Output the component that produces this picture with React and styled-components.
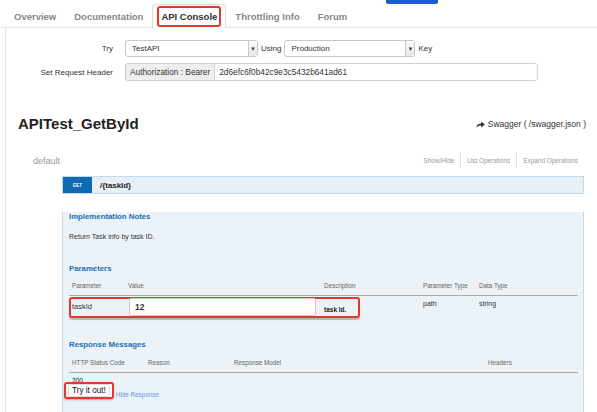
import styled, { createGlobalStyle } from "styled-components";

const GlobalStyle = createGlobalStyle`
  html, body {
    margin: 0;
    padding: 0;
    background: #fff;
    overflow: hidden;
  }
  body {
    font-family: "Liberation Sans", Arial, sans-serif;
    color: #333;
  }
`;

const Page = styled.div`
  width: 597px;
  height: 412px;
  overflow: hidden;
`;

const TabBar = styled.div`
  display: flex;
  align-items: flex-end;
  height: 27px;
  padding-left: 5px;
  border-bottom: 1px solid #e4e4e4;
`;

const Tab = styled.div`
  height: ${(p) => (p.active ? "23px" : "22px")};
  display: flex;
  align-items: center;
  padding: 0 ${(p) => (p.active ? "4px" : "8px")};
  font-size: 9.5px;
  font-weight: bold;
  color: ${(p) => (p.active ? "#333" : "#888")};
  background: ${(p) => (p.active ? "#fff" : "transparent")};
  border: ${(p) => (p.active ? "1px solid #ddd" : "1px solid transparent")};
  border-bottom: none;
  border-radius: 4px 4px 0 0;
  margin-bottom: ${(p) => (p.active ? "-1px" : "0")};
`;

const Highlight = styled.span`
  border: 2px solid #e5382d;
  border-radius: 3px;
  padding: 3px 2px;
`;

const BlueStub = styled.div`
  align-self: flex-start;
  margin-left: 30px;
  width: 52px;
  height: 4px;
  background: #1a5fd0;
  border-radius: 0 0 2px 2px;
`;

const Panel = styled.div`
  margin-left: 5px;
  border-left: 1px solid #e4e4e4;
  padding-top: 12px;
  height: 400px;
`;

const FormRow = styled.div`
  display: grid;
  grid-template-columns: 107px 1fr;
  column-gap: 12px;
  align-items: center;
  margin-bottom: 6px;
  font-size: 8px;
`;

const Label = styled.div`
  text-align: right;
  color: #333;
`;

const Controls = styled.div`
  display: flex;
  align-items: center;
  gap: 3px;
`;

const Select = styled.div`
  display: flex;
  align-items: center;
  justify-content: space-between;
  width: ${(p) => p.w}px;
  height: 17px;
  box-sizing: border-box;
  border: 1px solid #c8c8c8;
  border-radius: 3px;
  background: #fff;
  padding-left: 6px;
  font-size: 8px;
`;

const Caret = styled.div`
  width: 8px;
  height: 15px;
  border-left: 1px solid #c8c8c8;
  display: flex;
  align-items: center;
  justify-content: center;
  background: linear-gradient(#fafafa, #e8e8e8);
  font-size: 6px;
  color: #444;
`;

const InputGroup = styled.div`
  display: flex;
  width: 413px;
  height: 18px;
  box-sizing: border-box;
  border: 1px solid #cfcfcf;
  border-radius: 3px;
  overflow: hidden;
  font-size: 8.3px;
`;

const Addon = styled.div`
  display: flex;
  align-items: center;
  padding: 0 4px;
  background: #eee;
  border-right: 1px solid #cfcfcf;
`;

const InputText = styled.div`
  display: flex;
  align-items: center;
  padding-left: 4px;
`;

const TitleRow = styled.div`
  display: flex;
  justify-content: space-between;
  align-items: center;
  padding: 0 11px 0 12px;
  margin-top: 33px;
`;

const Title = styled.h1`
  margin: 0;
  font-size: 15px;
  font-weight: bold;
  color: #222;
  line-height: 20px;
`;

const SwaggerLink = styled.div`
  display: flex;
  align-items: center;
  gap: 3px;
  font-size: 8.5px;
  color: #333;
`;

const SectionRow = styled.div`
  display: flex;
  justify-content: space-between;
  align-items: center;
  padding: 0 19px 0 27px;
  margin-top: 19px;
`;

const SectionName = styled.div`
  font-size: 9px;
  color: #999;
`;

const OpsLinks = styled.div`
  display: flex;
  align-items: center;
  font-size: 6.4px;
  color: #999;
`;

const OpsLink = styled.span`
  padding: 2px 6px;
  border-left: ${(p) => (p.first ? "none" : "1px solid #e2e2e2")};
  line-height: 11px;
  &:last-child {
    padding-right: 0;
  }
`;

const OpBlock = styled.div`
  margin: 8px 13px 0 56px;
`;

const OpHeader = styled.div`
  display: flex;
  align-items: center;
  height: 18px;
  box-sizing: border-box;
  border: 1px solid #c3d9ec;
  background: #e7f0f7;
`;

const Method = styled.div`
  width: 29px;
  height: 16px;
  background: #0f6ab4;
  color: #fff;
  font-size: 4.5px;
  font-weight: bold;
  display: flex;
  align-items: center;
  justify-content: center;
`;

const Path = styled.div`
  margin-left: 8px;
  font-size: 7.9px;
  font-weight: bold;
  color: #222;
`;

const OpBody = styled.div`
  background: #ebf3f9;
  border: 1px solid #c3d9ec;
  border-top: none;
  padding: 0 5px 0 6px;
  height: 230px;
`;

const Heading = styled.h4`
  margin: ${(p) => p.top}px 0 0;
  font-size: 7.8px;
  font-weight: bold;
  color: #1d6eb5;
  line-height: 10px;
`;

const Notes = styled.p`
  margin: 10px 0 0;
  font-size: 7px;
  line-height: 10px;
  color: #333;
`;

const TableHead = styled.div`
  display: grid;
  grid-template-columns: ${(p) => p.cols};
  margin-top: ${(p) => p.top}px;
  padding: 0 3px 4px;
  border-bottom: 1px solid #a9a9a9;
  font-size: 6.3px;
  line-height: 10px;
  color: #666;
`;

const ParamRow = styled.div`
  display: grid;
  grid-template-columns: 56px 196px 99px 56px 1fr;
  margin-top: 1px;
  font-size: 7.5px;
`;

const RowHighlight = styled.div`
  grid-column: 1 / 4;
  grid-row: 1;
  justify-self: start;
  width: 291px;
  height: 21px;
  box-sizing: border-box;
  border: 2px solid #e5382d;
  border-radius: 3px;
  box-shadow: 0 2px 1px rgba(0, 0, 0, 0.25);
`;

const Cell = styled.div`
  grid-row: 1;
  grid-column: ${(p) => p.col};
  padding: ${(p) => p.pad || "6px 0 0 3px"};
  font-weight: ${(p) => (p.bold ? "bold" : "normal")};
  font-size: ${(p) => p.size || "7.5px"};
  color: ${(p) => (p.bold ? "#222" : "#333")};
  z-index: 1;
`;

const ValueInput = styled.div`
  margin: 1px 5px 0 4px;
  height: 18px;
  box-sizing: border-box;
  background: #fff;
  border: 1px solid #ccc;
  border-radius: 2px;
  display: flex;
  align-items: center;
  padding-left: 5px;
  font-size: 8.5px;
  font-weight: bold;
`;

const StatusRow = styled.div`
  padding: 4px 0 0 3px;
  font-size: 6.5px;
  line-height: 8px;
  color: #222;
`;

const ActionRow = styled.div`
  display: flex;
  align-items: flex-end;
  margin: -3px 0 0 -5px;
  position: relative;
`;

const ButtonFrame = styled.div`
  border: 2px solid #e5382d;
  border-radius: 3px;
  padding: 0 2px;
  background: #fff;
  box-shadow: 0 1px 2px rgba(0, 0, 0, 0.3);
`;

const TryButton = styled.button`
  display: block;
  font-family: "Liberation Sans", Arial, sans-serif;
  font-size: 8.2px;
  color: #111;
  background: #fff;
  border: 1px solid #ddd;
  border-radius: 2px;
  padding: 1px 3px;
  line-height: 9px;
`;

const HideLink = styled.span`
  margin-left: 2px;
  font-size: 6.3px;
  color: #5b9bd8;
  line-height: 9px;
`;

function ArrowIcon() {
  return (
    <svg width="9" height="7" viewBox="0 0 9 7">
      <path d="M0 6.5 C1 3.5 3 2.6 5.2 2.6 V0.5 L8.8 3.5 L5.2 6.5 V4.4 C3.2 4.4 1.6 5 0 6.5 Z" fill="#333" />
    </svg>
  );
}

export default function App() {
  return (
    <Page>
      <GlobalStyle />
      <TabBar>
        <Tab>Overview</Tab>
        <Tab>Documentation</Tab>
        <Tab active>
          <Highlight>API Console</Highlight>
        </Tab>
        <Tab>Throttling Info</Tab>
        <Tab>Forum</Tab>
        <BlueStub />
      </TabBar>
      <Panel>
        <FormRow>
          <Label>Try</Label>
          <Controls>
            <Select w={133}>
              TestAPI
              <Caret>▼</Caret>
            </Select>
            <span>Using</span>
            <Select w={131}>
              Production
              <Caret>▼</Caret>
            </Select>
            <span>Key</span>
          </Controls>
        </FormRow>
        <FormRow>
          <Label>Set Request Header</Label>
          <InputGroup>
            <Addon>Authorization : Bearer</Addon>
            <InputText>2d6efc6f0b42c9e3c5432b641ad61</InputText>
          </InputGroup>
        </FormRow>

        <TitleRow>
          <Title>APITest_GetById</Title>
          <SwaggerLink>
            <ArrowIcon />
            Swagger ( /swagger.json )
          </SwaggerLink>
        </TitleRow>

        <SectionRow>
          <SectionName>default</SectionName>
          <OpsLinks>
            <OpsLink first>Show/Hide</OpsLink>
            <OpsLink>List Operations</OpsLink>
            <OpsLink>Expand Operations</OpsLink>
          </OpsLinks>
        </SectionRow>

        <OpBlock>
          <OpHeader>
            <Method>GET</Method>
            <Path>/{"{taskId}"}</Path>
          </OpHeader>
          <OpBody>
            <Heading top={18}>Implementation Notes</Heading>
            <Notes>Return Task info by task ID.</Notes>
            <Heading top={22}>Parameters</Heading>
            <TableHead top={7} cols="56px 196px 99px 56px 1fr">
              <span>Parameter</span>
              <span>Value</span>
              <span>Description</span>
              <span>Parameter Type</span>
              <span>Data Type</span>
            </TableHead>
            <ParamRow>
              <RowHighlight />
              <Cell col={1} pad="5px 0 0 3px">taskId</Cell>
              <Cell col={2} pad="0">
                <ValueInput>12</ValueInput>
              </Cell>
              <Cell col={3} pad="9px 0 0 3px" bold size="6.5px">task Id.</Cell>
              <Cell col={4} pad="3px 0 0 3px" size="7px">path</Cell>
              <Cell col={5} pad="3px 0 0 3px" size="7px">string</Cell>
            </ParamRow>
            <Heading top={22}>Response Messages</Heading>
            <TableHead top={8} cols="76px 86px 254px 1fr">
              <span>HTTP Status Code</span>
              <span>Reason</span>
              <span>Response Model</span>
              <span>Headers</span>
            </TableHead>
            <StatusRow>200</StatusRow>
            <ActionRow>
              <ButtonFrame>
                <TryButton>Try it out!</TryButton>
              </ButtonFrame>
              <HideLink>Hide Response</HideLink>
            </ActionRow>
          </OpBody>
        </OpBlock>
      </Panel>
    </Page>
  );
}
